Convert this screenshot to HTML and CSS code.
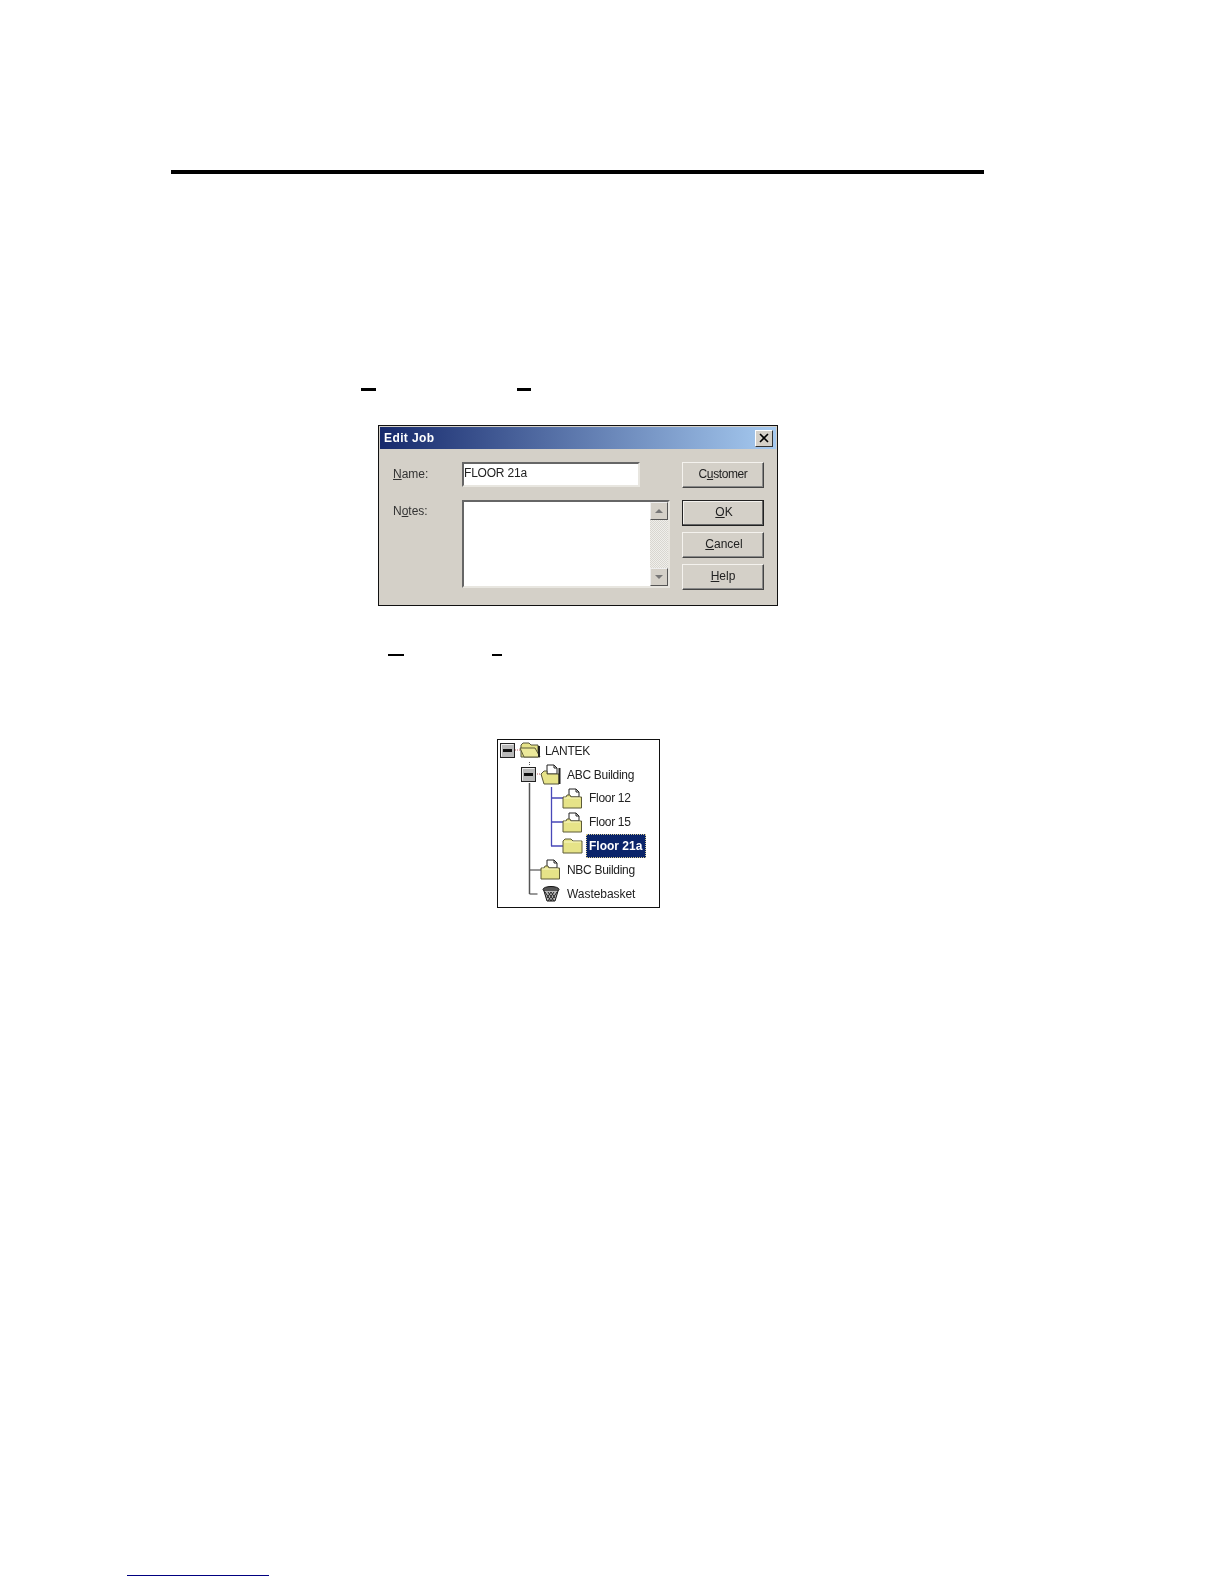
FILE: index.html
```html
<!DOCTYPE html>
<html lang="en">
<head>
  <meta charset="UTF-8">
  <title>Edit Job</title>
  <link rel="stylesheet" href="styles.css">
</head>
<body>
  <svg class="defs" width="0" height="0">
    <symbol id="folder-doc" viewBox="0 0 21 21">
      <path d="M7 1h7l3 3v5H7z" fill="#fff" stroke="#222"/>
      <path d="M14 1v3h3" fill="none" stroke="#222"/>
      <path d="M1 9h3l1-2h3l1 2h10.500v11H1z" fill="#e6e388" stroke="#5c5a38"/>
      <path d="M2 10h16" stroke="#f8f7c4"/>
    </symbol>
    <symbol id="folder-plain" viewBox="0 0 21 16">
      <path d="M1 3l2-2h6l2 2h9v12H1z" fill="#e6e388" stroke="#5c5a38"/>
      <path d="M2 4h17" stroke="#f8f7c4"/>
    </symbol>
    <symbol id="folder-open" viewBox="0 0 22 17">
      <path d="M2 3l2-2h6l2 2h7v12H2z" fill="#e6e388" stroke="#55543a"/>
      <path d="M1 6h15l5 9H5z" fill="#ece99a" stroke="#5c5a38"/>
      <path d="M20 4v11" stroke="#222" stroke-width="2"/>
    </symbol>
    <symbol id="folder-open-doc" viewBox="0 0 21 21">
      <path d="M7 1h7l3 3v6H7z" fill="#fff" stroke="#222"/>
      <path d="M14 1v3h3" fill="none" stroke="#222"/>
      <path d="M1 10l3-3h3v3h12v10H4z" fill="#e6e388" stroke="#55543a"/>
      <path d="M19.500 4v16" stroke="#222" stroke-width="2"/>
    </symbol>
    <symbol id="basket" viewBox="0 0 18 16">
      <ellipse cx="9" cy="3.500" rx="8" ry="3" fill="#555" stroke="#111"/>
      <path d="M2 5l3 10h8l3-10" fill="#bbb" stroke="#111"/>
      <path d="M3 6l6 9M6 6l6 9M9 6l4 6M15 6l-6 9M12 6l-6 9M9 6l-4 6" stroke="#222"/>
    </symbol>
    <symbol id="minus-box" viewBox="0 0 15 15">
      <rect x="0.500" y="0.500" width="14" height="14" fill="#b9b9b9" stroke="#222"/>
      <path d="M1.500 13.500v-12h12" fill="none" stroke="#eee"/>
      <rect x="3" y="6" width="9" height="3" fill="#111"/>
    </symbol>
  </svg>

  <div class="heavy-rule"></div>

  <div class="marks marks-top">
    <span class="mark mark-a"></span>
    <span class="mark mark-b"></span>
  </div>

  <div class="dialog">
    <div class="titlebar">
      <span class="title">Edit Job</span>
      <span class="close">
        <svg width="10" height="10" viewBox="0 0 10 10"><path d="M1 1l8 8M9 1l-8 8" stroke="#000" stroke-width="1.600"/></svg>
      </span>
    </div>
    <div class="dialog-body">
      <div class="row row-name">
        <label class="field-label"><u>N</u>ame:</label>
        <div class="input">FLOOR 21a</div>
        <button class="btn btn-narrow"><span>C<u>u</u>stomer</span></button>
      </div>
      <div class="row row-notes">
        <label class="field-label">N<u>o</u>tes:</label>
        <div class="textarea">
          <div class="scrollbar">
            <span class="arrow-btn"><i class="arrow-up"></i></span>
            <span class="track"></span>
            <span class="arrow-btn"><i class="arrow-down"></i></span>
          </div>
        </div>
        <div class="btn-col">
          <button class="btn btn-default"><span><u>O</u>K</span></button>
          <button class="btn"><span><u>C</u>ancel</span></button>
          <button class="btn btn-help"><span><u>H</u>elp</span></button>
        </div>
      </div>
    </div>
  </div>

  <div class="marks marks-bottom">
    <span class="mark mark-c"></span>
    <span class="mark mark-d"></span>
  </div>

  <div class="tree">
    <svg class="tree-lines" width="163" height="169" viewBox="0 0 163 169">
      <path d="M18 11h5M40 35h5" stroke="#b05a5a" stroke-dasharray="1 1"/>
      <path d="M32.500 131h12M32.500 155h8" stroke="#333"/>
      <path d="M32.500 23v4" stroke="#555" stroke-dasharray="1 1"/>
      <path d="M32.500 44v111" stroke="#555" stroke-width="1.500"/>
      <path d="M54.500 48v59M54 59h12M54 83h12M54 107h12" fill="none" stroke="#4848b8" stroke-width="1.300"/>
    </svg>
    <div class="tree-row level-0">
      <svg class="box" width="15" height="15"><use href="#minus-box"/></svg>
      <svg class="icon-open" width="22" height="17"><use href="#folder-open"/></svg>
      <span class="node node-lantek">LANTEK</span>
    </div>
    <div class="tree-row level-1">
      <svg class="box" width="15" height="15"><use href="#minus-box"/></svg>
      <svg class="icon-doc" width="21" height="21"><use href="#folder-open-doc"/></svg>
      <span class="node">ABC Building</span>
    </div>
    <div class="tree-row level-2">
      <svg class="icon-doc" width="21" height="21"><use href="#folder-doc"/></svg>
      <span class="node">Floor 12</span>
    </div>
    <div class="tree-row level-2">
      <svg class="icon-doc" width="21" height="21"><use href="#folder-doc"/></svg>
      <span class="node">Floor 15</span>
    </div>
    <div class="tree-row level-2">
      <svg class="icon-plain" width="21" height="16"><use href="#folder-plain"/></svg>
      <span class="node node-selected">Floor 21a</span>
    </div>
    <div class="tree-row level-3">
      <svg class="icon-doc" width="21" height="21"><use href="#folder-doc"/></svg>
      <span class="node">NBC Building</span>
    </div>
    <div class="tree-row level-4">
      <svg class="icon-basket" width="18" height="16"><use href="#basket"/></svg>
      <span class="node node-waste">Wastebasket</span>
    </div>
  </div>

  <div class="footnote-rule"></div>
</body>
</html>
```
FILE: styles.css
```css
html, body {
  margin: 0;
  padding: 0;
  background-color: #fff;
}
body {
  height: 1584px;
  overflow: hidden;
  font-family: "Liberation Sans", Arial, sans-serif;
  font-size: 12px;
  color: #222;
}
.defs {
  display: block;
  height: 0;
}
.heavy-rule {
  margin: 170px 0 0 171px;
  width: 813px;
  height: 4px;
  background-color: #000;
}
.marks {
  display: flex;
  align-items: flex-start;
}
.mark {
  display: block;
  background-color: #000;
}
.marks-top {
  margin: 214px 0 0 361px;
}
.mark-a {
  width: 15px;
  height: 3px;
}
.mark-b {
  width: 14px;
  height: 3px;
  margin-left: 141px;
}
.marks-bottom {
  margin: 48px 0 0 388px;
}
.mark-c {
  width: 16px;
  height: 2px;
}
.mark-d {
  width: 10px;
  height: 2px;
  margin-left: 88px;
}

/* dialog */
.dialog {
  box-sizing: border-box;
  margin: 34px 0 0 378px;
  width: 400px;
  height: 181px;
  border: 1px solid #111;
  background-color: #d4d0c8;
  padding: 1px;
  filter: blur(0.3px);
}
.titlebar {
  display: flex;
  align-items: center;
  justify-content: space-between;
  height: 22px;
  padding: 0 3px 0 4px;
  background: linear-gradient(to right, #16296c, #a6caf0);
}
.title {
  color: #fff;
  font-weight: bold;
  font-size: 12px;
  letter-spacing: 0.4px;
}
.close {
  display: flex;
  align-items: center;
  justify-content: center;
  width: 16px;
  height: 15px;
  background-color: #d4d0c8;
  border: 1px solid;
  border-color: #fff #333 #333 #fff;
}
.dialog-body {
  padding: 13px 12px 0 13px;
}
.row {
  display: flex;
  align-items: flex-start;
}
.row-notes {
  margin-top: 12px;
}
.field-label {
  flex: none;
  width: 69px;
  line-height: 16px;
  color: #333;
  padding-top: 3px;
}
.row-name .field-label {
  padding-top: 4px;
}
.input {
  box-sizing: border-box;
  flex: none;
  width: 178px;
  height: 25px;
  margin-right: 42px;
  padding: 0;
  letter-spacing: -0.2px;
  line-height: 18px;
  background-color: #fff;
  color: #222;
  border: 2px solid;
  border-color: #666 #e8e6e0 #e8e6e0 #666;
}
.textarea {
  box-sizing: border-box;
  flex: none;
  display: flex;
  justify-content: flex-end;
  width: 208px;
  height: 88px;
  margin-right: 12px;
  background-color: #fff;
  border: 2px solid;
  border-color: #666 #e8e6e0 #e8e6e0 #666;
}
.scrollbar {
  display: flex;
  flex-direction: column;
  width: 18px;
}
.arrow-btn {
  box-sizing: border-box;
  display: flex;
  align-items: center;
  justify-content: center;
  height: 18px;
  background-color: #d4d0c8;
  border: 1px solid;
  border-color: #eee #555 #555 #eee;
}
.track {
  flex: 1;
  background: repeating-conic-gradient(#f0efeb 0 25%, #d8d6d0 0 50%) 0 0 / 2px 2px;
}
.arrow-up, .arrow-down {
  display: block;
  width: 0;
  height: 0;
  border-left: 4px solid transparent;
  border-right: 4px solid transparent;
}
.arrow-up {
  border-bottom: 4px solid #777;
}
.arrow-down {
  border-top: 4px solid #777;
}
.btn-col {
  flex: none;
  display: flex;
  flex-direction: column;
  gap: 6px;
}
.btn {
  box-sizing: border-box;
  flex: none;
  display: block;
  width: 82px;
  height: 26px;
  padding: 0 0 2px 2px;
  font-family: inherit;
  font-size: 12px;
  color: #222;
  background-color: #d4d0c8;
  border: 1px solid;
  border-color: #f4f2ee #444 #444 #f4f2ee;
  box-shadow: inset -1px -1px 0 #888;
}
.btn-narrow {
  padding-left: 0;
  letter-spacing: -0.4px;
}
.btn-help {
  padding-left: 0;
}
.btn-default {
  border: 1px solid #222;
  box-shadow: inset -1px -1px 0 #666, inset 1px 1px 0 #f4f2ee;
}

/* tree */
.tree {
  box-sizing: border-box;
  position: relative;
  margin: 83px 0 0 497px;
  width: 163px;
  height: 169px;
  border: 1px solid #111;
  background-color: #fff;
  filter: blur(0.3px);
}
.tree-lines {
  position: absolute;
  left: -1px;
  top: -1px;
}
.tree-row {
  position: relative;
  display: flex;
  align-items: center;
  height: 23.800px;
}
.level-0 {
  margin-top: -1px;
  padding-left: 2px;
}
.level-1 {
  padding-left: 23px;
}
.level-2 {
  padding-left: 64px;
}
.level-3 {
  padding-left: 42px;
}
.level-4 {
  padding-left: 44px;
}
.box {
  flex: none;
  margin-right: 4px;
}
.icon-doc, .icon-plain, .icon-open, .icon-basket {
  flex: none;
}
.icon-doc {
  margin-top: -1px;
}
.level-2 .icon-doc {
  margin-top: 1px;
}
.icon-basket {
  margin-right: 1px;
}
.node {
  margin-left: 6px;
  font-size: 12px;
  letter-spacing: -0.3px;
  color: #222;
  white-space: nowrap;
}
.node-lantek {
  margin-left: 4px;
}
.node-waste {
  letter-spacing: -0.05px;
}
.node-selected {
  margin-left: 3px;
  padding: 5px 4px 5px 3px;
  background-color: #0a246a;
  color: #fff;
  letter-spacing: 0;
  font-weight: bold;
  outline: 1px dotted #d4c890;
  outline-offset: -1px;
}

.footnote-rule {
  margin: 667px 0 0 127px;
  width: 142px;
  height: 1px;
  background-color: #000080;
}
```
